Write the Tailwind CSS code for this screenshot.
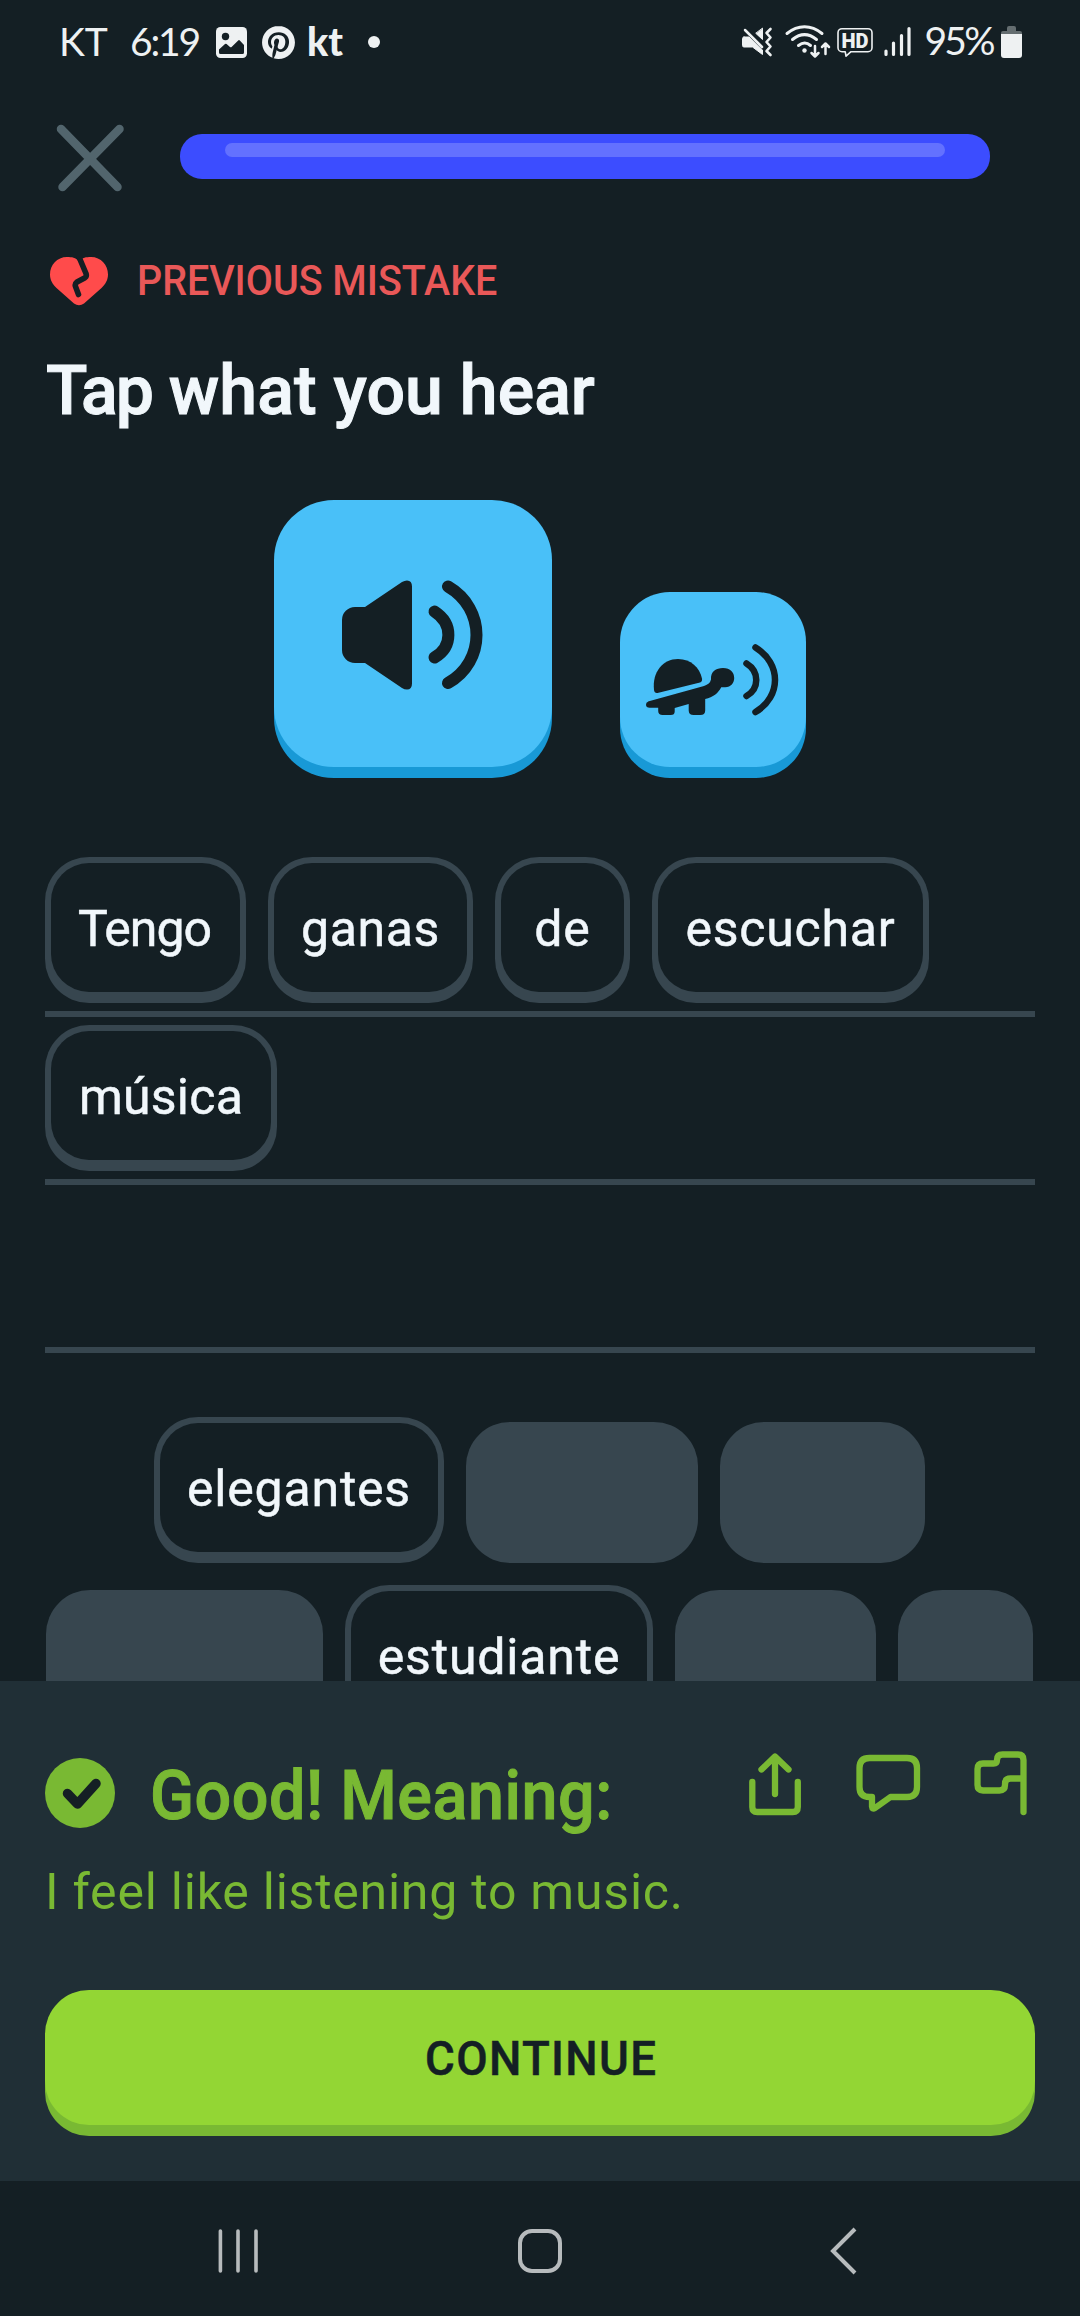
<!DOCTYPE html>
<html lang="es">
<head>
<meta charset="utf-8">
<title>Tap what you hear</title>
<script src="https://cdn.jsdelivr.net/npm/@tailwindcss/browser@4"></script>
</head>
<body class="bg-[#141f24] overflow-hidden">
<div class="relative w-[1080px] h-[2316px] overflow-hidden flex flex-col font-['Roboto',sans-serif] text-[#f1f7fb]">

  <!-- status bar -->
  <header class="h-[88px] shrink-0 flex items-start pt-[18px] pl-[59px] pr-[58px] text-[#eef1f2] whitespace-nowrap">
    <span class="font-['Lato',sans-serif] text-[39px] leading-[46px] w-[71px]">KT</span>
    <span class="font-['Lato',sans-serif] text-[39px] leading-[46px] tracking-[-2.2px] w-[86px]">6:19</span>
    <svg class="mt-[9px] w-[31px] h-[31px] shrink-0" viewBox="0 0 31 31"><rect width="31" height="31" rx="4.5" fill="currentColor"/><circle cx="9.5" cy="9.5" r="3.7" fill="#141f24"/><path d="M3 22.500l6-5.500q.8-.6 1.600 0l3.400 3q.8.6 1.600 0l6.600-6.500q.8-.8 1.600 0l4.200 4.500v7.500a1.500 1.500 0 0 1-1.500 1.500h-22a1.500 1.500 0 0 1-1.500-1.500z" fill="#141f24"/></svg>
    <svg class="mt-[8px] ml-[15px] w-[33px] h-[33px] shrink-0" viewBox="0 0 24 24" fill="currentColor"><path d="M12.017 0C5.396 0 .029 5.367.029 11.987c0 5.079 3.158 9.417 7.618 11.162-.105-.949-.199-2.403.041-3.439.219-.937 1.406-5.957 1.406-5.957s-.359-.72-.359-1.781c0-1.663.967-2.911 2.168-2.911 1.024 0 1.518.769 1.518 1.688 0 1.029-.653 2.567-.992 3.992-.285 1.193.6 2.165 1.775 2.165 2.128 0 3.768-2.245 3.768-5.487 0-2.861-2.063-4.869-5.008-4.869-3.41 0-5.409 2.562-5.409 5.199 0 1.033.394 2.143.889 2.741.099.12.112.225.085.345-.09.375-.293 1.199-.334 1.363-.053.225-.172.271-.401.165-1.495-.69-2.433-2.878-2.433-4.646 0-3.776 2.748-7.252 7.92-7.252 4.158 0 7.392 2.967 7.392 6.923 0 4.135-2.607 7.462-6.233 7.462-1.214 0-2.354-.629-2.758-1.379l-.749 2.848c-.269 1.045-1.004 2.352-1.498 3.146 1.123.345 2.306.535 3.55.535 6.607 0 11.985-5.365 11.985-11.987C23.97 5.39 18.592.026 11.985.026L12.017 0z"/></svg>
    <span class="ml-[12px] font-['Lato',sans-serif] font-black text-[39px] leading-[46px] w-[37px]">kt</span>
    <span class="ml-[24px] mt-[18px] size-[12px] rounded-full bg-current"></span>

    <div class="ml-auto flex items-start">
      <svg class="w-[290px] h-[46px]" viewBox="732 18 290 46" fill="none" stroke="currentColor" stroke-linecap="round" stroke-linejoin="round">
        <!-- muted, vibrating -->
        <path d="M744 37h5l13.500 13v4.500l-10-7.500h-8.500a1.500 1.500 0 0 1-1.500-1.500v-7a1.500 1.500 0 0 1 1.500-1.500z" fill="currentColor" stroke-width="1"/>
        <path d="M762.500 28.500v11l-6.500-6z" fill="currentColor" stroke-width="1"/>
        <path d="M745 30l17 17" stroke-width="2.500"/>
        <path d="M770.500 29l-4 4 4 4.500-4 4.500 4 4.500-4 4.500 4 4" stroke-width="2.600"/>
        <!-- wifi -->
        <path d="M787 33.500c11-9 24-9 35 0M792.500 39.500c8-6.500 16-6.500 24 0M798.500 45.500c4.500-3.500 8-3.500 12 0" stroke-width="3"/>
        <circle cx="804.500" cy="50.500" r="2.200" fill="currentColor" stroke="none"/>
        <path d="M815 46v10M811.500 53l3.500 3.500 3.500-3.500M825.500 54v-10M822 47l3.500-3.500 3.500 3.500" stroke-width="2.500"/>
        <!-- HD bubble -->
        <path d="M842 28.700h26a4 4 0 0 1 4 4v15a4 4 0 0 1-4 4h-17l-5 4.500-.800-4.500h-3.200a4 4 0 0 1-4-4v-15a4 4 0 0 1 4-4z" stroke-width="1.600"/>
        <text x="841.500" y="48" font-size="21" font-weight="900" font-family="Roboto, sans-serif" textLength="27" lengthAdjust="spacingAndGlyphs" fill="currentColor" stroke="none">HD</text>
        <!-- signal -->
        <path d="M886 51v3.500M893.500 43v11.500M901.500 35.500v19M909 28.500v26" stroke-width="3.200"/>
        <text x="924.500" y="55" font-size="39" font-family="Lato, sans-serif" letter-spacing="-2.800" fill="currentColor" stroke="none">95%</text>
        <!-- battery -->
        <path d="M1001 34v-1a2 2 0 0 1 2-2h4v-3a2 2 0 0 1 2-2h5a2 2 0 0 1 2 2v3h4a2 2 0 0 1 2 2v1z" fill="#646d70" stroke="none"/>
        <path d="M1001 34h21v21a3 3 0 0 1-3 3h-15a3 3 0 0 1-3-3z" fill="currentColor" stroke="none"/>
      </svg>
    </div>
  </header>

  <!-- lesson progress -->
  <div class="h-[136px] shrink-0 flex items-start pl-[54px]">
    <svg class="mt-[34px] w-[72px] h-[72px]" viewBox="54 122 72 72" fill="none" stroke="#52656d" stroke-width="8.500" stroke-linecap="round"><path d="M61 129l56.500 58M119.500 129l-57 58"/></svg>
    <div class="mt-[46px] ml-[54px] w-[810px] h-[45px] rounded-[22px] bg-[#3c4dff] px-[45px] pt-[9px]">
      <div class="h-[14px] rounded-full bg-[#6371ff]"></div>
    </div>
  </div>

  <main class="h-[1457px] shrink-0 overflow-hidden">
    <div class="mt-[31px] h-[49px] flex items-start pl-[49px]">
      <svg class="mt-[1px] w-[60px] h-[50px]" viewBox="49 256 60 50"><path d="M67 257c5 0 8.500.5 12 4.500 3.500-4 7-4.500 12-4.500 10 0 17 8 17 17.500 0 5.500-2.500 9.500-6.500 13.500l-17.500 15.500q-5 3.500-10 0l-17.500-15.500c-4-4-6.500-8-6.500-13.500 0-9.500 7-17.500 17-17.500z" fill="#ff4b4b"/><path d="M79 256l7 16.500q1 3-1.500 4.500l-7.500 4q-2.500 2-1.500 4.500l3 8" transform="translate(0 1)" fill="none" stroke="#141f24" stroke-width="5.600" stroke-linecap="round" stroke-linejoin="round"/></svg>
      <span class="ml-[28px] mt-px text-[42px] leading-[49px] font-medium text-[#e95858] whitespace-nowrap origin-left scale-x-[0.938]">PREVIOUS MISTAKE</span>
    </div>
    <h1 class="mt-[47px] pl-[46px] h-[80px] text-[68px] leading-[80px] font-medium tracking-[0.05px] [-webkit-text-stroke:1px_#f1f7fb] whitespace-nowrap"><span class="tracking-[-2px]">Tap</span> what you hear</h1>

    <!-- audio buttons -->
    <div class="mt-[69px] h-[278px] flex justify-center items-end gap-[68px] pb-[11px]">
      <div class="w-[278px] h-[267px] rounded-[60px] bg-[#49c0f8] shadow-[0_11px_0_#1899d6]">
        <svg class="w-[278px] h-[267px]" viewBox="274 500 278 267" fill="none" stroke="#141f24" stroke-linecap="round"><path d="M355 607h10l37-25q2.500-1.500 5-1.500 5 0 5 6v97q0 6-5 6-2.500 0-5-1.500l-37-25h-10a13 13 0 0 1-13-13v-30a13 13 0 0 1 13-13z" fill="#141f24" stroke="none"/><path d="M434.500 611.500c18.500 12 18.500 35 0 46M448 586.500c38 22 38 75 0 96.500" stroke-width="12"/></svg>
      </div>
      <div class="w-[186px] h-[175px] rounded-[50px] bg-[#49c0f8] shadow-[0_11px_0_#1899d6]">
        <svg class="w-[186px] h-[175px]" viewBox="620 592 186 175" fill="#141f24" stroke="none"><path d="M657.500 693q-3 .5-3.500-3c-2-18 9-31 24-31 13 0 21.500 8.500 24 19.500q.5 3-2 4z"/><path d="M648 701.500l56-15.500q6-2 7-6.500c-.5-8 5-11.500 12-11.500 7.500 0 11.200 4.500 11.200 10 0 5-3.200 9.200-9 9.200h-4c-3 6-8 10-16 11.800v11.500q0 4.500-5 4.500h-6.500q-5 0-5-4.500v-6.500l-14 4v3.500q0 3.500-4 3.500h-8q-4.500 0-4.500-4v-3.200h-8.500q-3.700 0-3.700-3 0-2.300 2-3z"/><path d="M746.500 663.500c13 8 13 25 0 32.500M755.500 647.500c26 16 26 49 0 64.500" fill="none" stroke="#141f24" stroke-width="6.500" stroke-linecap="round"/></svg>
      </div>
    </div>

    <!-- answer lines -->
    <div class="mt-[71px] mx-[45px] text-[50px] leading-[58px] [-webkit-text-stroke:0.5px_#f1f7fb]">
      <div class="h-[168px] flex gap-[22px] pt-[8px] border-b-[6px] border-[#37464f]">
        <div class="w-[201px] h-[146px] shrink-0 rounded-[44px] bg-[#37464f] px-[6px] pt-[6px] pb-[11px]"><div class="h-full rounded-[38px] bg-[#141f24] flex items-center justify-center pt-[3px] pr-[2px] tracking-[-1px]">Tengo</div></div>
        <div class="w-[205px] h-[146px] shrink-0 rounded-[44px] bg-[#37464f] px-[6px] pt-[6px] pb-[11px]"><div class="h-full rounded-[38px] bg-[#141f24] flex items-center justify-center pt-[3px] tracking-[0.6px]">ganas</div></div>
        <div class="w-[135px] h-[146px] shrink-0 rounded-[44px] bg-[#37464f] px-[6px] pt-[6px] pb-[11px]"><div class="h-full rounded-[38px] bg-[#141f24] flex items-center justify-center pt-[3px] tracking-[0.8px]">de</div></div>
        <div class="w-[277px] h-[146px] shrink-0 rounded-[44px] bg-[#37464f] px-[6px] pt-[6px] pb-[11px]"><div class="h-full rounded-[38px] bg-[#141f24] flex items-center justify-center pt-[3px] tracking-[0.77px]">escuchar</div></div>
      </div>
      <div class="h-[168px] flex pt-[8px] border-b-[6px] border-[#37464f]">
        <div class="w-[232px] h-[146px] shrink-0 rounded-[44px] bg-[#37464f] px-[6px] pt-[6px] pb-[11px]"><div class="h-full rounded-[38px] bg-[#141f24] flex items-center justify-center pt-[3px] tracking-[0.25px]">música</div></div>
      </div>
      <div class="h-[168px] border-b-[6px] border-[#37464f]"></div>
    </div>

    <!-- word bank -->
    <div class="mt-[64px] flex flex-col gap-[22px] pr-[1px] text-[50px] leading-[58px] [-webkit-text-stroke:0.5px_#f1f7fb]">
      <div class="flex justify-center items-end gap-[22px]">
        <div class="w-[290px] h-[146px] shrink-0 rounded-[44px] bg-[#37464f] px-[6px] pt-[6px] pb-[11px]"><div class="h-full rounded-[38px] bg-[#141f24] flex items-center justify-center pt-[3px] tracking-[0.8px]">elegantes</div></div>
        <div class="w-[232px] h-[141px] rounded-[44px] bg-[#37464f]"></div>
        <div class="w-[205px] h-[141px] rounded-[44px] bg-[#37464f]"></div>
      </div>
      <div class="flex justify-center items-end gap-[22px]">
        <div class="w-[277px] h-[141px] rounded-[44px] bg-[#37464f]"></div>
        <div class="w-[308px] h-[146px] shrink-0 rounded-[44px] bg-[#37464f] px-[6px] pt-[6px] pb-[11px]"><div class="h-full rounded-[38px] bg-[#141f24] flex items-center justify-center pt-[3px] tracking-[0.82px]">estudiante</div></div>
        <div class="w-[201px] h-[141px] rounded-[44px] bg-[#37464f]"></div>
        <div class="w-[135px] h-[141px] rounded-[44px] bg-[#37464f]"></div>
      </div>
    </div>
  </main>

  <!-- result sheet -->
  <section class="h-[500px] shrink-0 bg-[#202f36] px-[45px] text-[#79b933]">
    <div class="pt-[74px] flex items-start">
      <svg class="mt-[3px] w-[70px] h-[70px] shrink-0" viewBox="0 0 70 70"><circle cx="35" cy="35" r="35" fill="currentColor"/><path d="M22.500 35.500l10 10.500 18.500-20.500" fill="none" stroke="#141f24" stroke-width="9.500" stroke-linecap="round" stroke-linejoin="round"/></svg>
      <h2 class="ml-[35px] mt-px -mb-px text-[68px] leading-[80px] font-medium tracking-[0.6px] origin-left scale-x-[0.95] [-webkit-text-stroke:1px_#79b933] whitespace-nowrap">Good! Meaning:</h2>
      <svg class="ml-auto -mt-[5px] mr-[3px] w-[290px] h-[70px] shrink-0" viewBox="742 1750 290 70" fill="none" stroke="currentColor" stroke-width="6.300" stroke-linecap="round" stroke-linejoin="round">
        <path d="M752.300 1782v25q0 5 5 5h35.500q5 0 5-5v-25M775 1794v-37M761.500 1769.500l13.500-13 13.500 13"/>
        <path d="M869.500 1758h37.500q10 0 10 10v19q0 10-10 10h-16.500l-15.500 11q-2.800 1.500-3-1.500v-9.500h-2.500q-10 0-10-10v-19q0-10 10-10z"/>
        <path d="M1023.500 1812v-52q0-5.500-5.500-5.500h-15.500q-5.500 0-5.500 5.500 0 3.500-3.500 3.500h-10.500q-5.500 0-5.500 5.500v16q0 5.500 5.500 5.500h16.500q5.500 0 5.500-5.500v-1q0-5.500 5.500-5.500h13"/>
      </svg>
    </div>
    <p class="mt-[28px] text-[50px] leading-[58px] tracking-[0.77px] whitespace-nowrap">I feel like listening to music.</p>
    <div class="mt-[69px] h-[135px] rounded-[44px] bg-[#93d634] shadow-[0_11px_0_#79b933] flex items-center justify-center pt-[2px] text-[48px] leading-[57px] font-medium text-[#141f24] [-webkit-text-stroke:0.5px_#141f24]"><span class="scale-x-[0.95] tracking-[1.4px] pl-[2px]">CONTINUE</span></div>
  </section>

  <!-- system navigation -->
  <nav class="h-[135px] shrink-0 flex items-center pl-[216px] pb-[2px] pt-[7px] text-[#b7bbbd]">
    <svg class="w-[44px] h-[48px]" viewBox="216 2227 44 48" stroke="currentColor" stroke-width="3.600" stroke-linecap="round"><path d="M220.400 2231v40M238 2231v40M256 2231v40"/></svg>
    <svg class="ml-[256px] w-[48px] h-[48px]" viewBox="516 2227 48 48" fill="none" stroke="currentColor" stroke-width="4"><rect x="520" y="2231" width="40" height="40" rx="12"/></svg>
    <svg class="ml-[264px] w-[30px] h-[50px]" viewBox="828 2226 30 50" fill="none" stroke="currentColor" stroke-width="4"><path d="M855 2229l-22 22 22 22"/></svg>
  </nav>
</div>
</body>
</html>
